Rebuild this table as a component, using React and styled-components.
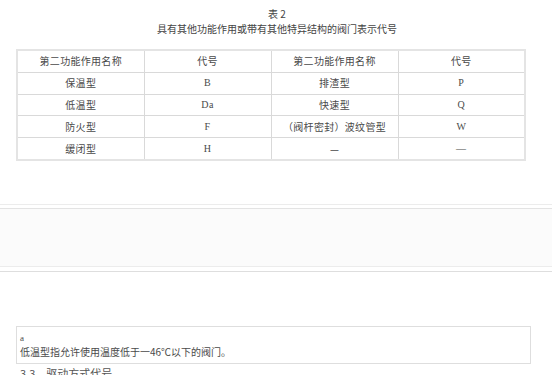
import React from "react";
import styled, { createGlobalStyle } from "styled-components";

const Global = createGlobalStyle`
  html, body { margin: 0; padding: 0; background: #fff; }
  body {
    font-family: "Noto Sans CJK SC", "Liberation Sans", sans-serif;
    color: #4a4a4a;
    font-size: 10px;
  }
`;

const Page = styled.div`
  width: 554px;
  height: 375px;
  overflow: hidden;
  display: flex;
  flex-direction: column;
`;

const Caption = styled.div`
  display: flex;
  flex-direction: column;
  align-items: center;
  padding-top: 6px;
  line-height: 15px;
  font-size: 10px;
  color: #444;
`;

const Table = styled.table`
  margin: 13px 0 0 16px;
  width: 510px;
  border-collapse: collapse;
  table-layout: fixed;
  border: 2px solid #e4e4e4;
`;

const Cell = styled.td`
  height: 20.8px;
  padding: 0;
  border: 1px solid #d9d9d9;
  text-align: center;
  vertical-align: middle;
  font-size: 10px;
  line-height: 14px;
  letter-spacing: 0.3px;
  font-family: ${(p) =>
    p.$code
      ? `"Liberation Serif", "Noto Sans CJK SC", serif`
      : `"Noto Sans CJK SC", sans-serif`};
  color: #4a4a4a;
`;

const Band = styled.div`
  margin-top: 43px;
  width: 552px;
  border-top: 1px solid #ececec;
  border-bottom: 1px solid #dedede;
  padding: 3px 0 4px;
`;

const BandInner = styled.div`
  height: 57px;
  background: #fbfbfb;
  border-top: 1px solid #e3e3e3;
  border-bottom: 1px solid #ececec;
`;

const Note = styled.div`
  margin: 54px 0 0 16px;
  width: 507px;
  border: 1px solid #dedede;
  padding: 4px 3px;
  display: flex;
  flex-direction: column;
  line-height: 14px;
  font-size: 10px;
`;

const NoteMark = styled.span`
  font-family: "Liberation Serif", serif;
  font-size: 9px;
`;

const Heading = styled.div`
  margin: 1px 0 0 20px;
  font-size: 11px;
  line-height: 16px;
  color: #555;
`;

const rows = [
  ["保温型", "B", "排渣型", "P"],
  ["低温型", "Da", "快速型", "Q"],
  ["防火型", "F", "（阀杆密封）波纹管型", "W"],
  ["缓闭型", "H", "—", "—"],
];

export default function App() {
  return (
    <Page>
      <Global />
      <Caption>
        <span>表 2</span>
        <span>具有其他功能作用或带有其他特异结构的阀门表示代号</span>
      </Caption>
      <Table>
        <tbody>
          <tr>
            <Cell>第二功能作用名称</Cell>
            <Cell>代号</Cell>
            <Cell>第二功能作用名称</Cell>
            <Cell>代号</Cell>
          </tr>
          {rows.map((r, i) => (
            <tr key={i}>
              <Cell>{r[0]}</Cell>
              <Cell $code>{r[1]}</Cell>
              <Cell>{r[2]}</Cell>
              <Cell $code>{r[3]}</Cell>
            </tr>
          ))}
        </tbody>
      </Table>
      <Band>
        <BandInner />
      </Band>
      <Note>
        <NoteMark>a</NoteMark>
        <span>低温型指允许使用温度低于一46℃以下的阀门。</span>
      </Note>
      <Heading>3.3　驱动方式代号</Heading>
    </Page>
  );
}
